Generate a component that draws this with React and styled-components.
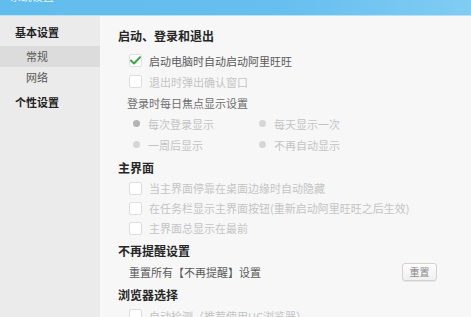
import React from "react";
import styled, { createGlobalStyle } from "styled-components";

const Global = createGlobalStyle`
  html, body { margin: 0; padding: 0; background: #f7f7f7; }
  body { font-family: "Noto Sans CJK SC", "Noto Sans", sans-serif; overflow: hidden; }
  * { box-sizing: border-box; }
`;

const Window = styled.div`
  width: 471px;
  height: 317px;
  display: flex;
  flex-direction: column;
  overflow: hidden;
  background: #f7f7f7;
`;

const TitleBar = styled.div`
  height: 16px;
  flex: none;
  background: linear-gradient(90deg, #62bcec 0%, #66bfee 60%, #80ccf3 100%);
  border-bottom: 1px solid #b9e0f5;
  overflow: hidden;
  padding-left: 10px;
`;

const TitleText = styled.div`
  margin-top: -11px;
  font-size: 11px;
  line-height: 14px;
  color: rgba(255, 255, 255, 0.85);
`;

const Body = styled.div`
  flex: 1;
  display: flex;
  min-height: 0;
`;

const Sidebar = styled.div`
  width: 100px;
  flex: none;
  background: #ebebeb;
  padding-top: 6px;
  display: flex;
  flex-direction: column;
`;

const NavGroup = styled.div`
  height: 21px;
  line-height: 21px;
  width: 74px;
  text-align: center;
  font-size: 11px;
  font-weight: bold;
  color: #222;
  margin-bottom: ${(p) => p.$mb || 0}px;
  margin-top: ${(p) => p.$mt || 0}px;
`;

const NavItem = styled.div`
  height: 21px;
  line-height: 21px;
  font-size: 11px;
  color: #555;
  background: ${(p) => (p.$active ? "#dcdcdc" : "transparent")};
  & > span {
    display: block;
    width: 74px;
    text-align: center;
  }
`;

const Content = styled.div`
  flex: 1;
  padding: 9px 0 0 18px;
  background: #f7f7f7;
`;

const Section = styled.div`
  margin-bottom: 2px;
`;

const Heading = styled.div`
  height: 21px;
  line-height: 21px;
  font-size: 12px;
  font-weight: bold;
  color: #262626;
  margin-bottom: ${(p) => p.$gap || 0}px;
`;

const Row = styled.div`
  height: ${(p) => p.$h || 21}px;
  display: flex;
  align-items: center;
  padding-left: 11px;
  font-size: 11px;
  color: ${(p) => (p.$disabled ? "#c4c4c4" : "#5a5a5a")};
`;

const Label = styled(Row)`
  padding-left: 9px;
  color: #6e6e6e;
`;

const Box = styled.span`
  width: 13px;
  height: 13px;
  flex: none;
  border: 1px solid #dedede;
  border-radius: 2px;
  background: #ffffff;
  margin-right: 7px;
  display: flex;
  align-items: center;
  justify-content: center;
`;

const RadioPair = styled.div`
  display: flex;
  width: 100%;
`;

const RadioOpt = styled.div`
  display: flex;
  align-items: center;
  width: ${(p) => p.$w || "auto"};
  color: #c4c4c4;
  padding-left: 4px;
`;

const Dot = styled.span`
  width: 7px;
  height: 7px;
  border-radius: 50%;
  background: ${(p) => (p.$on ? "#b4b4b4" : "#d6d6d6")};
  margin-right: 8px;
  flex: none;
`;

const ResetRow = styled(Row)`
  padding-right: 34px;
  justify-content: space-between;
`;

const ResetButton = styled.button`
  width: 35px;
  height: 18px;
  padding: 0;
  border: 1px solid #d2d2d2;
  border-radius: 3px;
  background: linear-gradient(#fdfdfd, #f0f0f0);
  font-family: inherit;
  font-size: 10px;
  color: #8a8a8a;
  box-shadow: 0 1px 0 #e6e6e6;
`;

const Check = () => (
  <svg width="11" height="9" viewBox="0 0 11 9">
    <path d="M1 4.5 L4 7.5 L10 1.2" fill="none" stroke="#3aa845" strokeWidth="2" strokeLinecap="round" strokeLinejoin="round" />
  </svg>
);

const CheckRow = ({ children, checked, disabled, h }) => (
  <Row $disabled={disabled} $h={h}>
    <Box>{checked && <Check />}</Box>
    {children}
  </Row>
);

export default function App() {
  return (
    <>
      <Global />
      <Window>
        <TitleBar>
          <TitleText>系统设置</TitleText>
        </TitleBar>
        <Body>
          <Sidebar>
            <NavGroup $mb={3}>基本设置</NavGroup>
            <NavItem $active><span>常规</span></NavItem>
            <NavItem><span>网络</span></NavItem>
            <NavGroup $mt={4}>个性设置</NavGroup>
          </Sidebar>
          <Content>
            <Section>
              <Heading $gap={4}>启动、登录和退出</Heading>
              <CheckRow checked>启动电脑时自动启动阿里旺旺</CheckRow>
              <CheckRow disabled>退出时弹出确认窗口</CheckRow>
              <Label>登录时每日焦点显示设置</Label>
              <Row>
                <RadioPair>
                  <RadioOpt $w="126px"><Dot $on />每次登录显示</RadioOpt>
                  <RadioOpt><Dot />每天显示一次</RadioOpt>
                </RadioPair>
              </Row>
              <Row>
                <RadioPair>
                  <RadioOpt $w="126px"><Dot />一周后显示</RadioOpt>
                  <RadioOpt><Dot />不再自动显示</RadioOpt>
                </RadioPair>
              </Row>
            </Section>
            <Section>
              <Heading>主界面</Heading>
              <CheckRow disabled h={20}>当主界面停靠在桌面边缘时自动隐藏</CheckRow>
              <CheckRow disabled h={20}>在任务栏显示主界面按钮(重新启动阿里旺旺之后生效)</CheckRow>
              <CheckRow disabled h={20}>主界面总显示在最前</CheckRow>
            </Section>
            <Section>
              <Heading>不再提醒设置</Heading>
              <ResetRow>
                <span>重置所有【不再提醒】设置</span>
                <ResetButton>重置</ResetButton>
              </ResetRow>
            </Section>
            <Section>
              <Heading>浏览器选择</Heading>
              <CheckRow disabled>自动检测（推荐使用UC浏览器）</CheckRow>
            </Section>
          </Content>
        </Body>
      </Window>
    </>
  );
}
